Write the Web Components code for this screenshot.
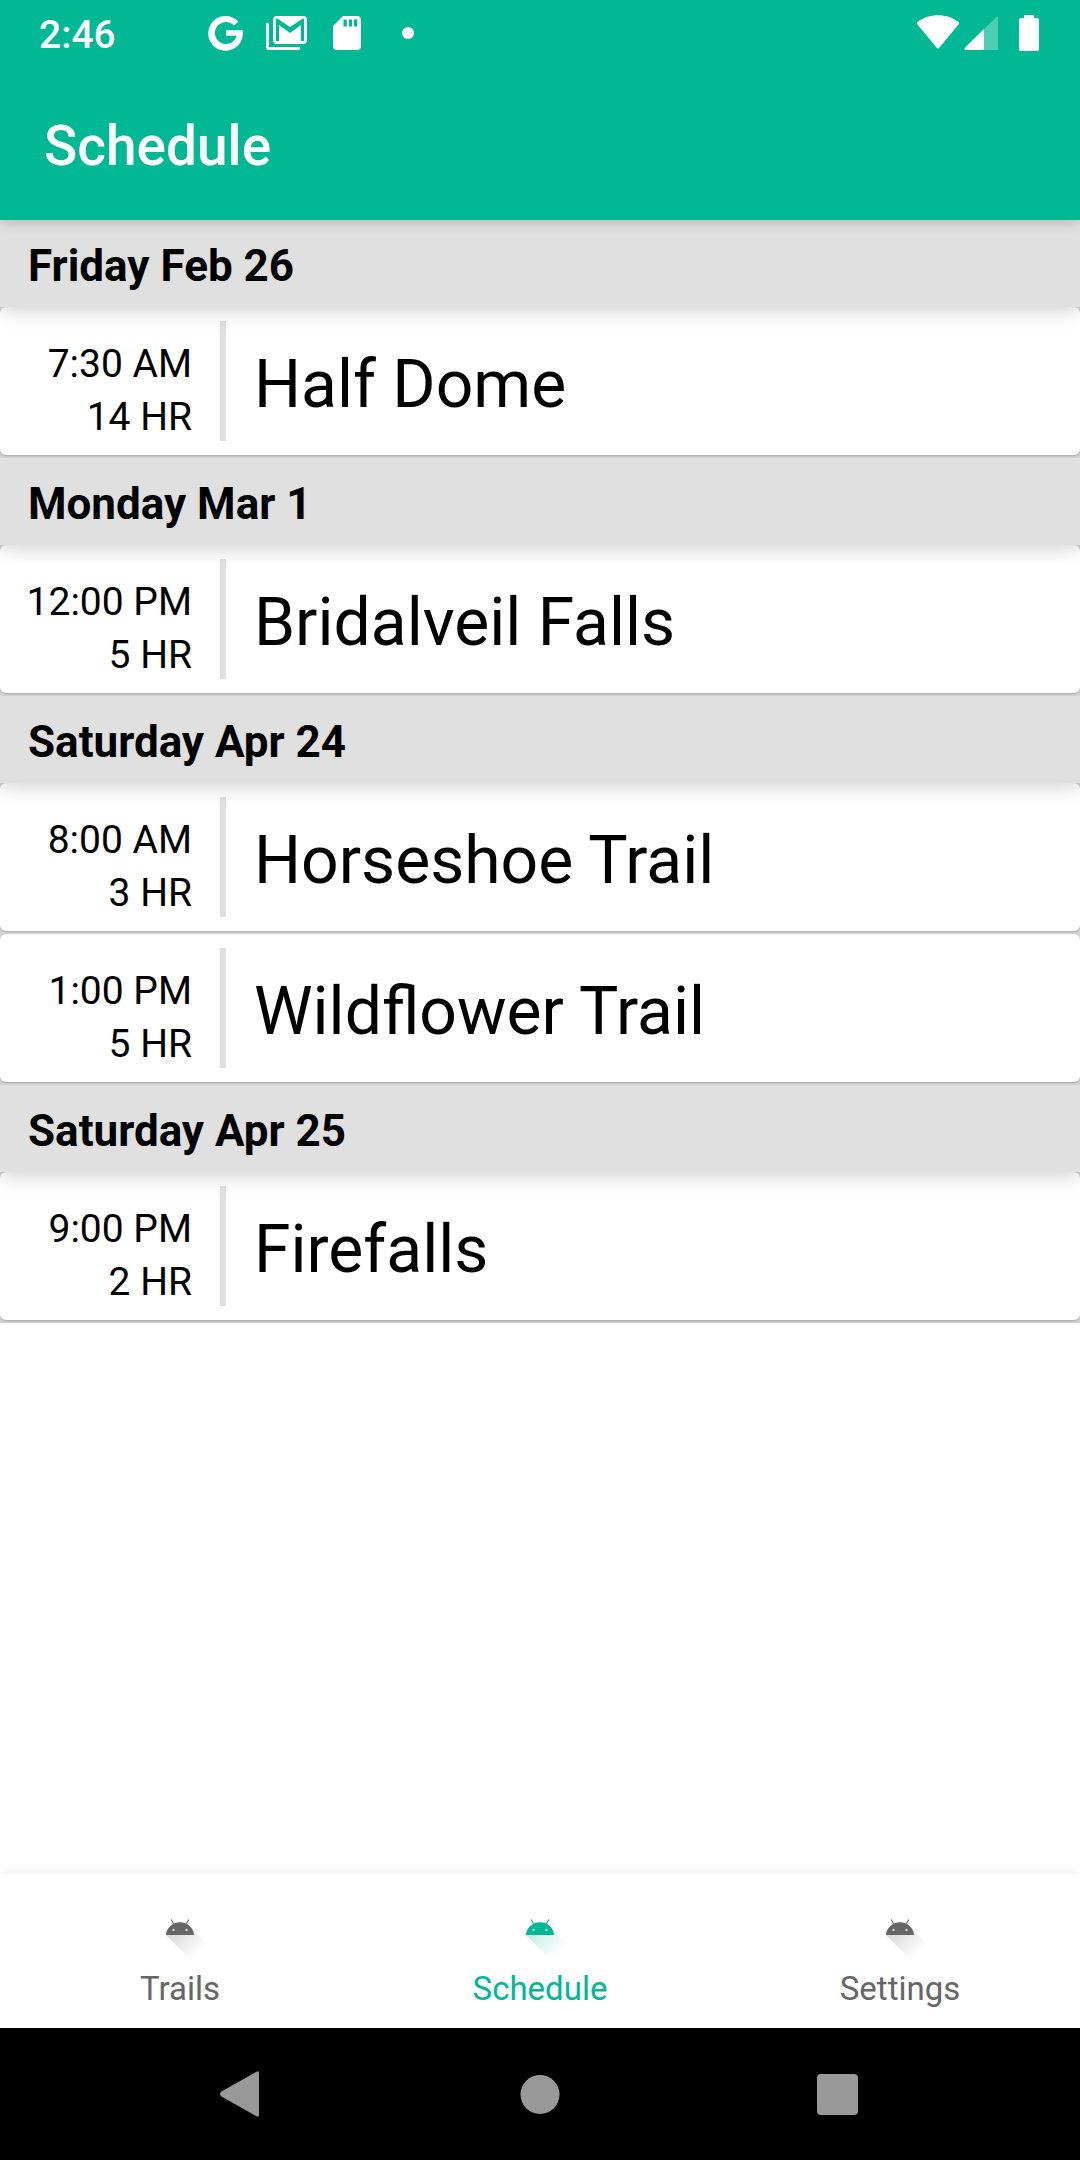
<!DOCTYPE html>
<html lang="en">
<head>
<meta charset="utf-8">
<meta name="viewport" content="width=device-width, initial-scale=1">
<title>Schedule</title>
<style>
  body { margin: 0; background: #fff; color: #000; font-family: Roboto, "Liberation Sans", sans-serif; }
</style>
</head>
<body>
<app-shell>
  <status-bar slot="top" time="2:46"></status-bar>
  <app-bar slot="top">Schedule</app-bar>
  <schedule-day heading="Friday Feb 26">
    <schedule-event time="7:30 AM" duration="14 HR">Half Dome</schedule-event>
  </schedule-day>
  <schedule-day heading="Monday Mar 1">
    <schedule-event time="12:00 PM" duration="5 HR">Bridalveil Falls</schedule-event>
  </schedule-day>
  <schedule-day heading="Saturday Apr 24">
    <schedule-event time="8:00 AM" duration="3 HR">Horseshoe Trail</schedule-event>
    <schedule-event time="1:00 PM" duration="5 HR">Wildflower Trail</schedule-event>
  </schedule-day>
  <schedule-day heading="Saturday Apr 25">
    <schedule-event time="9:00 PM" duration="2 HR">Firefalls</schedule-event>
  </schedule-day>
  <tab-bar slot="bottom">
    <tab-item href="#trails">Trails</tab-item>
    <tab-item href="#schedule" active>Schedule</tab-item>
    <tab-item href="#settings">Settings</tab-item>
  </tab-bar>
  <system-nav slot="bottom"></system-nav>
</app-shell>

<script>
  const define = (name, render) => customElements.define(name, class extends HTMLElement {
    connectedCallback() {
      if (this.shadowRoot) return;
      this.attachShadow({ mode: 'open' }).innerHTML = render(this);
    }
  });

  define('app-shell', () => `
    <style>
      :host { display: flex; flex-direction: column; min-height: 100vh; --accent: #00b894; --line: #e0e0e0; }
      header { position: relative; z-index: 3; background: var(--accent); color: #fff; box-shadow: 0 2px 12px rgba(0,0,0,.2); }
      main { flex: 1; }
      footer { box-shadow: 0 0 12px rgba(0,0,0,.1); }
    </style>
    <header><slot name="top"></slot></header>
    <main><slot></slot></main>
    <footer><slot name="bottom"></slot></footer>`);

  define('status-bar', el => `
    <style>
      :host { display: flex; justify-content: space-between; height: 66px; padding: 0 40px 0 39px; }
      .group { display: flex; align-items: center; }
      time { font-size: 39px; font-weight: 500; line-height: 70px; align-self: flex-start; margin-right: 92px; }
      svg { display: block; fill: #fff; }
      .notes { gap: 22px; }
      .notes .dot { margin-left: 17px; }
      .state { gap: 4px; }
      .state .battery { margin-left: 16px; }
    </style>
    <div class="group">
      <time>${el.getAttribute('time')}</time>
      <div class="group notes">
        <svg width="36" height="36" viewBox="0 0 36 36"><path d="M30.4 6.6A17.4 17.4 0 1 0 35 18.600V15.200H18V20.700H28.600A11 11 0 1 1 26 10.600Z"/></svg>
        <svg width="44" height="36" viewBox="0 0 44 36"><path fill-rule="evenodd" d="M11 1H37Q41 1 41 5V25Q41 29 37 29H11Q7 29 7 25V5Q7 1 11 1ZM10 4V26H13V10L24 18L35 10V26H38V4H36L24 12L12 4Z"/><path d="M0 8H3V32H34V35H3Q0 35 0 32Z"/></svg>
        <svg width="30" height="36" viewBox="0 0 30 36"><path fill-rule="evenodd" d="M11 1H25Q29 1 29 5V31Q29 35 25 35H5Q1 35 1 31V11ZM11.500 4.500V11.500H14.800V4.500ZM16.800 4.500V11.500H20V4.500ZM22 4.500V11.500H25.300V4.500Z"/></svg>
        <svg class="dot" width="14" height="14" viewBox="0 0 14 14"><circle cx="7" cy="7" r="6"/></svg>
      </div>
    </div>
    <div class="group state">
      <svg width="44" height="36" viewBox="0 0 44 36"><path d="M1.500 9.500Q0 8 1.800 6.800C13-1.800 31-1.800 42.200 6.800Q44 8 42.500 9.500L23.500 32.500Q22 34.500 20.500 32.500Z"/></svg>
      <svg width="34" height="36" viewBox="0 0 34 36"><path d="M32 2.300Q34 .6 34 3.300V35H3Q-.8 35 1.200 32.400Z" opacity=".3"/><path d="M20 14V35H3Q-.8 35 1.200 32.400Z"/></svg>
      <svg class="battery" width="22" height="38" viewBox="0 0 22 38"><path d="M6 1H16V4H19Q21 4 21 6V35Q21 37 19 37H3Q1 37 1 35V6Q1 4 3 4H6Z"/></svg>
    </div>`);

  define('app-bar', () => `
    <style>
      :host { display: flex; align-items: center; height: 148px; padding: 6px 44px 0; }
      h1 { margin: 0; font-size: 55px; font-weight: 500; line-height: 64px; }
    </style>
    <h1><slot></slot></h1>`);

  define('schedule-day', el => `
    <style>
      :host { display: block; }
      h2 { position: relative; z-index: 1; margin: 0; padding: 20px 28px 15px; background: var(--line);
           font-size: 44px; font-weight: 700; line-height: 52px; box-shadow: 0 4px 18px rgba(0,0,0,.18); clip-path: inset(0 0 -32px); }
      section { display: flex; flex-direction: column; }
    </style>
    <section>
      <h2>${el.getAttribute('heading')}</h2>
      <slot></slot>
    </section>`);

  define('schedule-event', el => `
    <style>
      :host { display: block; padding-bottom: 3px; background: #d2d2d2; overflow: hidden; }
      article { display: flex; background: #fff; border-radius: 6px; box-shadow: 0 1px 2px rgba(0,0,0,.2); }
      .when { width: 192px; padding: 31px 28px 11px 0; box-sizing: content-box; text-align: right; font-size: 39px; line-height: 53px; }
      .when > * { display: block; }
      .rule { width: 6px; margin: 14px 0; background: var(--line); }
      h3 { flex: 1; align-self: center; margin: 0; padding: 8px 28px 0; font-size: 66px; font-weight: 400; line-height: 78px; }
    </style>
    <article>
      <div class="when"><time>${el.getAttribute('time')}</time><span>${el.getAttribute('duration')}</span></div>
      <div class="rule"></div>
      <h3><slot></slot></h3>
    </article>`);

  define('tab-bar', () => `
    <style>
      :host { display: block; background: #fff; }
      nav { display: flex; }
    </style>
    <nav><slot></slot></nav>`);

  define('tab-item', el => `
    <style>
      :host { display: block; flex: 1; color: #666; }
      :host([active]) { color: var(--accent); }
      a { display: flex; flex-direction: column; align-items: center; padding: 22px 0 12px; color: inherit; text-decoration: none; font-size: 33px; line-height: 54px; }
      svg { display: block; }
    </style>
    <a href="${el.getAttribute('href')}"${el.hasAttribute('active') ? ' aria-current="page"' : ''}>
      <svg width="66" height="66" viewBox="0 0 108 108" fill="currentColor" aria-hidden="true">
        <defs><linearGradient id="fade" gradientUnits="userSpaceOnUse" x1="42.949" y1="49.598" x2="85.848" y2="92.496">
          <stop offset="0" stop-color="currentColor" stop-opacity=".27"/><stop offset="1" stop-color="currentColor" stop-opacity="0"/>
        </linearGradient></defs>
        <path fill="url(#fade)" d="M31 63.928c0 0 6.400-11 12.100-13.100c7.200-2.600 26-1.400 26-1.400l38.100 38.100L107 108.928l-32-1Z"/>
        <path fill-rule="evenodd" d="M65.300 45.828l3.800-6.600c.2-.4 .1-.9-.3-1.100c-.4-.2-.9-.1-1.100 .3l-3.900 6.700c-6.300-2.800-13.400-2.800-19.700 0l-3.900-6.700c-.2-.4-.7-.5-1.100-.3c-.3 .2-.4 .7-.2 1.100l3.800 6.600C36.200 49.428 31.700 56.028 31 63.928h46C76.300 56.028 71.800 49.428 65.300 45.828ZM43.400 57.328a1.900 1.900 0 1 1 .01 0ZM64.600 57.328a1.900 1.900 0 1 1 .01 0Z"/>
      </svg>
      <slot></slot>
    </a>`);

  define('system-nav', () => `
    <style>
      :host { display: flex; padding: 0 93px; height: 132px; background: #000; }
      button { flex: 1; display: flex; align-items: center; justify-content: center; padding: 0; border: 0; background: none; }
      svg { display: block; fill: #999; }
    </style>
    <button type="button" aria-label="Back"><svg width="48" height="48" viewBox="0 0 48 48"><path d="M38 1.900Q41 .2 41 3.500V44.500Q41 47.800 38 46.100L3.500 26.500Q.5 24 3.500 21.500Z"/></svg></button>
    <button type="button" aria-label="Home"><svg width="48" height="48" viewBox="0 0 48 48"><circle cx="24" cy="24.500" r="19.500"/></svg></button>
    <button type="button" aria-label="Recent apps"><svg width="48" height="48" viewBox="0 0 48 48"><rect x="3" y="4" width="41" height="41" rx="4"/></svg></button>`);
</script>
</body>
</html>
